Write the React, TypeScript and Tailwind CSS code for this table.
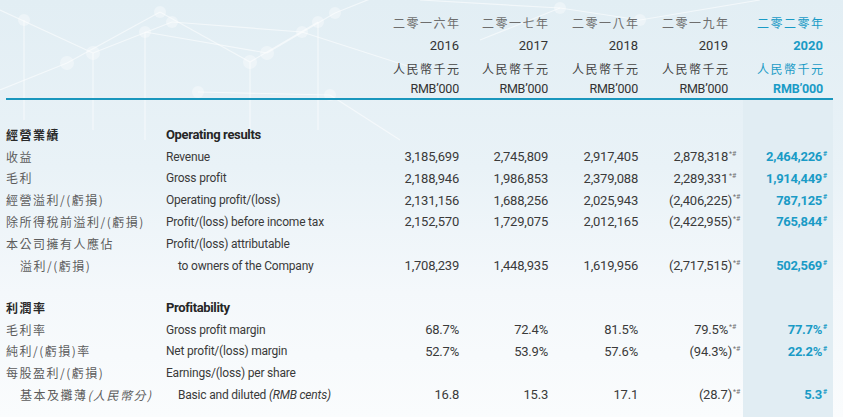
import React from "react";

const EN = "font-['Roboto','Liberation_Sans',sans-serif]";
const ZH = "font-['Noto_Sans_CJK_TC','Noto_Sans_CJK_SC',sans-serif]";
const GRID = "grid grid-cols-[160px_203px_90px_89px_90px_105px_90px]";

type R = {
  zh: React.ReactNode;
  en: React.ReactNode;
  bold?: boolean;
  indent?: boolean;
  v?: string[];
};

const sec1: R[] = [
  { zh: "經營業績", en: "Operating results", bold: true },
  { zh: "收益", en: "Revenue", v: ["3,185,699", "2,745,809", "2,917,405", "2,878,318", "2,464,226"] },
  { zh: "毛利", en: "Gross profit", v: ["2,188,946", "1,986,853", "2,379,088", "2,289,331", "1,914,449"] },
  { zh: "經營溢利/(虧損)", en: "Operating profit/(loss)", v: ["2,131,156", "1,688,256", "2,025,943", "(2,406,225)", "787,125"] },
  { zh: "除所得稅前溢利/(虧損)", en: "Profit/(loss) before income tax", v: ["2,152,570", "1,729,075", "2,012,165", "(2,422,955)", "765,844"] },
  { zh: "本公司擁有人應佔", en: "Profit/(loss) attributable" },
  { zh: "溢利/(虧損)", en: "to owners of the Company", indent: true, v: ["1,708,239", "1,448,935", "1,619,956", "(2,717,515)", "502,569"] },
];

const sec2: R[] = [
  { zh: "利潤率", en: "Profitability", bold: true },
  { zh: "毛利率", en: "Gross profit margin", v: ["68.7%", "72.4%", "81.5%", "79.5%", "77.7%"] },
  { zh: "純利/(虧損)率", en: "Net profit/(loss) margin", v: ["52.7%", "53.9%", "57.6%", "(94.3%)", "22.2%"] },
  { zh: "每股盈利/(虧損)", en: "Earnings/(loss) per share" },
  {
    zh: (
      <span>
        基本及攤薄<span className="italic">(人民幣分)</span>
      </span>
    ),
    en: (
      <span>
        Basic and diluted <span className="italic">(RMB cents)</span>
      </span>
    ),
    indent: true,
    v: ["16.8", "15.3", "17.1", "(28.7)", "5.3"],
  },
];

function Shade({ children }: { children?: React.ReactNode }) {
  return <div className="bg-[#e1edf3] h-full flex items-center justify-end">{children}</div>;
}

function Row({ r }: { r: R }) {
  const v = r.v;
  return (
    <div className={`${GRID} h-[21.8px] items-stretch`}>
      <div
        className={`${ZH} flex items-center text-[12px] tracking-[1.5px] ${
          r.bold ? "font-bold text-[#2a2a2a]" : "text-[#5c5c5c]"
        } ${r.indent ? "pl-[14px]" : ""} whitespace-nowrap`}
      >
        {r.zh}
      </div>
      <div
        className={`${EN} flex items-center whitespace-pre ${
          r.bold ? "font-bold text-[13px] tracking-[-0.35px] text-[#262626]" : "text-[12px] tracking-[-0.2px] text-[#3a3a3a]"
        } ${r.indent ? "pl-[12px]" : ""}`}
      >
        {r.en}
      </div>
      {[0, 1, 2].map((i) => (
        <div key={i} className={`${EN} flex items-center justify-end text-[13px] tracking-[-0.2px] text-[#3a3a3a]`}>
          {v ? v[i] : ""}
        </div>
      ))}
      <div className={`${EN} flex items-center justify-end pr-[2px] text-[13px] tracking-[-0.2px] text-[#3a3a3a]`}>
        {v && (
          <>
            <span>{v[3]}</span>
            <span className="self-start mt-[5px] inline-block w-[9px] pl-[1px] text-left text-[7px] leading-none text-[#6f6f6f] tracking-normal">
              *#
            </span>
            {!v[3].endsWith(")") && <span className="inline-block w-[4px]" />}
          </>
        )}
      </div>
      <Shade>
        {v && (
          <div className={`${EN} flex items-center h-full pr-[5px] text-[13px] font-bold tracking-[-0.3px] text-[#1a9bc6]`}>
            <span>{v[4]}</span>
            <span className="self-start mt-[5px] inline-block w-[6px] pl-[1px] text-left text-[7px] leading-none tracking-normal">
              #
            </span>
          </div>
        )}
      </Shade>
    </div>
  );
}

function Spacer({ h }: { h: string }) {
  return (
    <div className={`${GRID} ${h}`}>
      <div />
      <div />
      <div />
      <div />
      <div />
      <div />
      <Shade />
    </div>
  );
}

const years = [
  ["二零一六年", "2016"],
  ["二零一七年", "2017"],
  ["二零一八年", "2018"],
  ["二零一九年", "2019"],
];

function Bg() {
  const stroke = "rgba(255,255,255,0.55)";
  const nodes: [number, number, number][] = [
    [93, 53, 7],
    [67, 63, 7],
    [145, 32, 6],
    [172, 22, 6],
    [160, 12, 6],
    [250, 62, 7],
    [267, 53, 7],
    [302, 32, 6],
    [318, 22, 6],
    [335, 13, 6],
    [24, 20, 6],
    [198, 92, 6],
    [330, 95, 6],
    [560, 8, 6],
    [640, 20, 6],
  ];
  return (
    <svg className="absolute inset-0 pointer-events-none" width="843" height="417" viewBox="0 0 843 417">
      <g stroke={stroke} strokeWidth="1.2" fill="none">
        <line x1="0" y1="10" x2="93" y2="53" />
        <line x1="93" y1="53" x2="172" y2="22" />
        <line x1="67" y1="63" x2="160" y2="12" />
        <line x1="160" y1="12" x2="250" y2="62" />
        <line x1="145" y1="32" x2="267" y2="53" />
        <line x1="267" y1="53" x2="335" y2="13" />
        <line x1="250" y1="62" x2="318" y2="22" />
        <line x1="172" y1="22" x2="302" y2="32" />
        <line x1="335" y1="13" x2="380" y2="-5" />
        <line x1="302" y1="32" x2="420" y2="70" />
        <line x1="93" y1="53" x2="93" y2="130" />
        <line x1="145" y1="32" x2="145" y2="140" />
        <line x1="250" y1="62" x2="250" y2="140" />
        <line x1="318" y1="22" x2="318" y2="130" />
        <line x1="24" y1="20" x2="24" y2="120" />
        <line x1="420" y1="0" x2="560" y2="8" />
        <line x1="560" y1="8" x2="640" y2="20" />
        <line x1="640" y1="20" x2="760" y2="0" />
        <line x1="480" y1="40" x2="560" y2="8" />
        <line x1="0" y1="90" x2="67" y2="63" />
        <line x1="198" y1="92" x2="330" y2="95" />
        <line x1="330" y1="95" x2="400" y2="140" />
      </g>
      <g fill="rgba(255,255,255,0.35)">
        {nodes.map(([x, y, r], i) => (
          <circle key={i} cx={x} cy={y} r={r} />
        ))}
      </g>
    </svg>
  );
}

export default function App() {
  return (
    <div className="relative w-[843px] h-[417px] overflow-hidden bg-[linear-gradient(180deg,#e2eef4_0%,#e9f2f7_40%,#f4f8fb_70%,#fafcfd_100%)]">
      <Bg />
      <div className="relative flex flex-col h-full pl-[6px] pr-[10px] pt-[11px]">
        {/* header */}
        <div className={`${GRID} h-[24px]`}>
          <div />
          <div />
          {years.map(([z], i) => (
            <div
              key={z}
              className={`${ZH} flex items-center justify-end text-[12px] tracking-[1.5px] mr-[-1.5px] text-[#6e6e6e] ${i === 3 ? "pr-[15px]" : ""}`}
            >
              {z}
            </div>
          ))}
          <div className={`${ZH} flex items-center justify-end text-[12px] tracking-[1.5px] pr-[8.5px] text-[#1a9bc6]`}>二零二零年</div>
        </div>
        <div className={`${GRID} h-[22px]`}>
          <div />
          <div />
          {years.map(([z, y], i) => (
            <div key={y} className={`${EN} flex items-center justify-end text-[13px] text-[#333] ${i === 3 ? "pr-[15px]" : ""}`}>
              {y}
            </div>
          ))}
          <div className={`${EN} flex items-center justify-end text-[13px] font-bold pr-[10px] text-[#1a9bc6]`}>2020</div>
        </div>
        <div className={`${GRID} h-[23px]`}>
          <div />
          <div />
          {years.map(([y], i) => (
            <div
              key={y}
              className={`${ZH} flex items-center justify-end text-[12px] tracking-[1.5px] mr-[-1.5px] text-[#444] ${i === 3 ? "pr-[15px]" : ""}`}
            >
              人民幣千元
            </div>
          ))}
          <div className={`${ZH} flex items-center justify-end text-[12px] tracking-[1.5px] pr-[8.5px] text-[#1a9bc6]`}>人民幣千元</div>
        </div>
        <div className={`${GRID} h-[18px]`}>
          <div />
          <div />
          {years.map(([y], i) => (
            <div key={y} className={`${EN} flex items-center justify-end text-[12.5px] tracking-[-0.2px] text-[#333] ${i === 3 ? "pr-[15px]" : ""}`}>
              RMB’000
            </div>
          ))}
          <div className={`${EN} flex items-center justify-end text-[12.5px] font-bold tracking-[-0.2px] pr-[10px] text-[#1a9bc6]`}>RMB’000</div>
        </div>
        <div className="h-[2px] bg-[#1996bd] shrink-0" />
        <Spacer h="h-[24px]" />
        {sec1.map((r, i) => (
          <Row key={i} r={r} />
        ))}
        <Spacer h="h-[20.4px]" />
        {sec2.map((r, i) => (
          <Row key={i} r={r} />
        ))}
        <div className={`${GRID} flex-1`}>
          <div />
          <div />
          <div />
          <div />
          <div />
          <div />
          <Shade />
        </div>
      </div>
    </div>
  );
}
